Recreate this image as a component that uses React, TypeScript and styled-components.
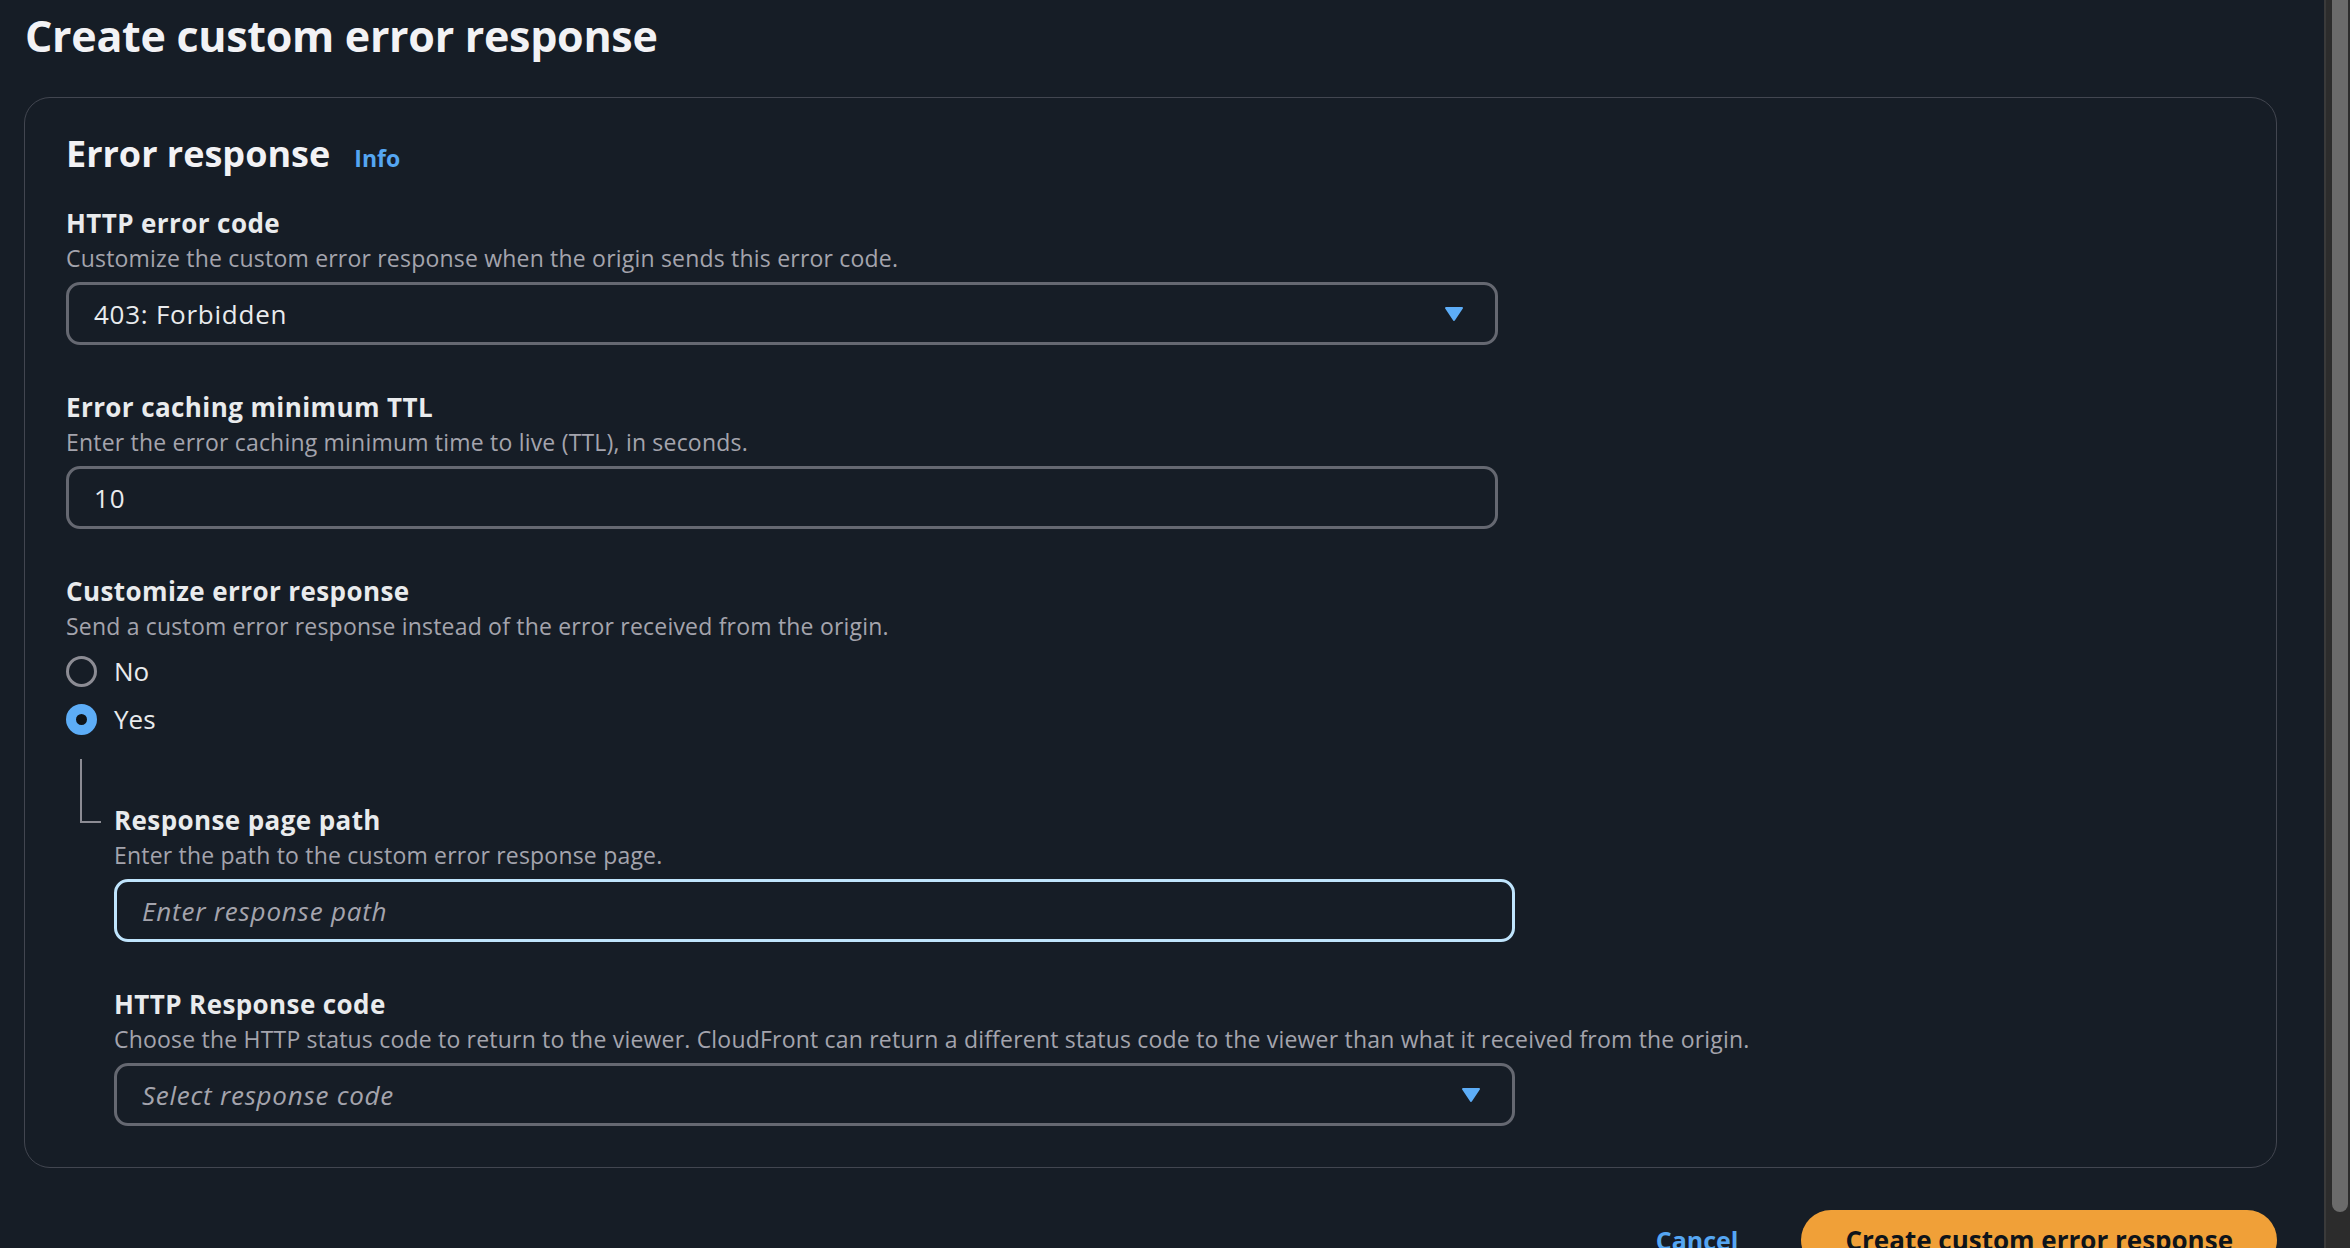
import React from 'react';
import styled, { createGlobalStyle } from 'styled-components';

const FontStack = `"Open Sans", "Noto Sans", "Liberation Sans", sans-serif`;

const GlobalStyle = createGlobalStyle`
  html, body {
    margin: 0;
    padding: 0;
    background: #161d26;
    overflow: hidden;
  }
  body {
    font-family: ${FontStack};
    color: #e9ebed;
  }
  * {
    box-sizing: border-box;
  }
`;

const Page = styled.div`
  width: 2324px;
  height: 1248px;
  padding: 8px 47px 0 24px;
`;

const PageTitle = styled.h1`
  margin: 0 0 33px 1px;
  font-size: 43px;
  line-height: 56px;
  font-weight: 700;
  letter-spacing: -0.3px;
  color: #f2f2f5;
`;

const Card = styled.section`
  border: 1px solid #424650;
  border-radius: 26px;
  padding: 34px 41px 41px 41px;
`;

const CardHeader = styled.div`
  display: flex;
  align-items: baseline;
  gap: 24px;
  margin-bottom: 31px;
`;

const CardTitle = styled.h2`
  margin: 0;
  font-size: 36px;
  line-height: 44px;
  font-weight: 700;
  color: #f2f2f5;
`;

const InfoLink = styled.a`
  font-size: 23px;
  font-weight: 700;
  color: #55a6f2;
  text-decoration: none;
`;

const Field = styled.div<{ $width: number }>`
  display: flex;
  flex-direction: column;
  width: ${(p) => p.$width}px;
  & + & {
    margin-top: 46px;
  }
`;

const Label = styled.label`
  font-size: 26px;
  line-height: 32px;
  font-weight: 700;
  letter-spacing: 0.4px;
  color: #e9ebed;
`;

const Description = styled.div`
  margin-top: 4px;
  margin-bottom: 9px;
  font-size: 23px;
  line-height: 30px;
  letter-spacing: 0.2px;
  color: #a4a4ad;
  white-space: nowrap;
`;

const SelectBox = styled.div`
  height: 63px;
  border: 3px solid #656871;
  border-radius: 14px;
  display: flex;
  align-items: center;
  justify-content: space-between;
  padding: 0 31px 0 25px;
`;

const SelectValue = styled.span<{ $placeholder?: boolean }>`
  font-size: 26px;
  letter-spacing: 0.75px;
  color: ${(p) => (p.$placeholder ? '#a4a4ad' : '#e9ebed')};
  font-style: ${(p) => (p.$placeholder ? 'italic' : 'normal')};
`;

const TextInput = styled.input<{ $focused?: boolean }>`
  height: 63px;
  width: 100%;
  border: 3px solid ${(p) => (p.$focused ? '#bfe4fc' : '#656871')};
  border-radius: 14px;
  background: transparent;
  padding: 0 25px;
  font-family: ${FontStack};
  font-size: 26px;
  letter-spacing: 0.8px;
  color: #e9ebed;
  outline: none;
  &::placeholder {
    color: #a4a4ad;
    font-style: italic;
  }
`;

const RadioGroup = styled.div`
  display: flex;
  flex-direction: column;
  margin-top: -3px;
`;

const RadioRow = styled.label`
  height: 48px;
  display: flex;
  align-items: center;
  gap: 17px;
  font-size: 26px;
  color: #e9ebed;
`;

const RadioCircle = styled.span<{ $checked?: boolean }>`
  width: 31px;
  height: 31px;
  border-radius: 50%;
  border: ${(p) => (p.$checked ? '10px solid #5dadf7' : '3px solid #8c8c94')};
  background: ${(p) => (p.$checked ? '#0f141a' : 'transparent')};
`;

const Nested = styled.div`
  position: relative;
  margin-top: 16px;
  padding-top: 45px;
  padding-left: 48px;

  &::before {
    content: '';
    position: absolute;
    left: 14px;
    top: 0;
    width: 19px;
    height: 62px;
    border-left: 2px solid #8c8c94;
    border-bottom: 2px solid #8c8c94;
  }
`;

const Footer = styled.div`
  display: flex;
  justify-content: flex-end;
  align-items: center;
  margin-top: 42px;
  gap: 33px;
`;

const LinkButton = styled.button`
  background: none;
  border: none;
  padding: 0 30px;
  font-family: ${FontStack};
  font-size: 25px;
  font-weight: 700;
  color: #55a6f2;
`;

const PrimaryButton = styled.button`
  height: 60px;
  padding: 0 44px;
  border: none;
  border-radius: 30px;
  background: #f0a038;
  font-family: ${FontStack};
  font-size: 26px;
  font-weight: 700;
  color: #0f141a;
`;

const Scrollbar = styled.div`
  position: fixed;
  top: 0;
  right: 0;
  width: 26px;
  height: 100%;
  background: #2c2c2c;
  border-left: 2px solid #3a3a3a;
`;

const ScrollThumb = styled.div`
  position: absolute;
  left: 6px;
  top: -12px;
  width: 16px;
  height: 1224px;
  border-radius: 8px;
  background: #6b6b6b;
`;

const Caret = () => (
  <svg width="20" height="16" viewBox="0 0 20 16">
    <path d="M2 2 H18 L10 14 Z" fill="#5dadf7" stroke="#5dadf7" strokeWidth="2" strokeLinejoin="round" />
  </svg>
);

const App = () => {
  return (
    <>
      <GlobalStyle />
      <Page>
        <PageTitle>Create custom error response</PageTitle>
        <Card>
          <CardHeader>
            <CardTitle>Error response</CardTitle>
            <InfoLink>Info</InfoLink>
          </CardHeader>

          <Field $width={1432}>
            <Label>HTTP error code</Label>
            <Description>Customize the custom error response when the origin sends this error code.</Description>
            <SelectBox>
              <SelectValue>403: Forbidden</SelectValue>
              <Caret />
            </SelectBox>
          </Field>

          <Field $width={1432}>
            <Label>Error caching minimum TTL</Label>
            <Description>Enter the error caching minimum time to live (TTL), in seconds.</Description>
            <TextInput value="10" readOnly />
          </Field>

          <Field $width={1432}>
            <Label>Customize error response</Label>
            <Description>Send a custom error response instead of the error received from the origin.</Description>
            <RadioGroup>
              <RadioRow>
                <RadioCircle />
                No
              </RadioRow>
              <RadioRow>
                <RadioCircle $checked />
                Yes
              </RadioRow>
            </RadioGroup>
          </Field>

          <Nested>
            <Field $width={1401}>
              <Label>Response page path</Label>
              <Description>Enter the path to the custom error response page.</Description>
              <TextInput $focused placeholder="Enter response path" />
            </Field>
            <Field $width={1401}>
              <Label>HTTP Response code</Label>
              <Description>
                Choose the HTTP status code to return to the viewer. CloudFront can return a different status code to
                the viewer than what it received from the origin.
              </Description>
              <SelectBox>
                <SelectValue $placeholder>Select response code</SelectValue>
                <Caret />
              </SelectBox>
            </Field>
          </Nested>
        </Card>
        <Footer>
          <LinkButton>Cancel</LinkButton>
          <PrimaryButton>Create custom error response</PrimaryButton>
        </Footer>
      </Page>
      <Scrollbar>
        <ScrollThumb />
      </Scrollbar>
    </>
  );
};

export default App;
